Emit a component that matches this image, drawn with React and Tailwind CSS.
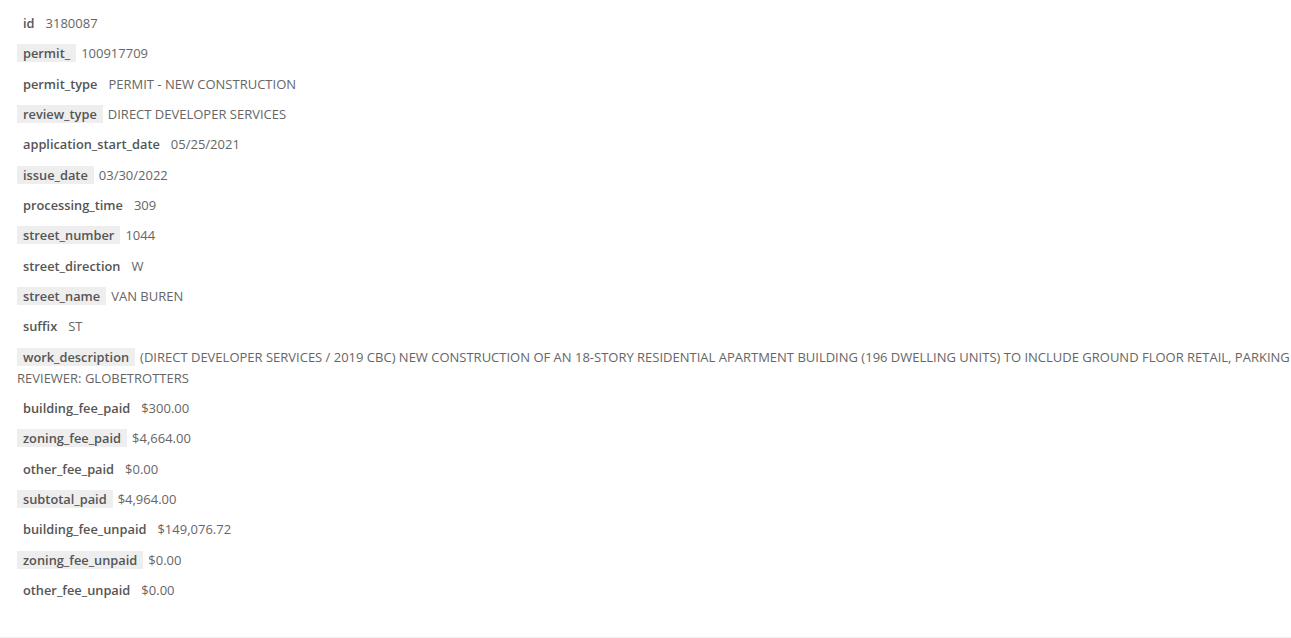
import React from 'react'

const rows = [
  ['id', '3180087'],
  ['permit_', '100917709'],
  ['permit_type', 'PERMIT - NEW CONSTRUCTION'],
  ['review_type', 'DIRECT DEVELOPER SERVICES'],
  ['application_start_date', '05/25/2021'],
  ['issue_date', '03/30/2022'],
  ['processing_time', '309'],
  ['street_number', '1044'],
  ['street_direction', 'W'],
  ['street_name', 'VAN BUREN'],
  ['suffix', 'ST'],
  [
    'work_description',
    '(DIRECT DEVELOPER SERVICES / 2019 CBC) NEW CONSTRUCTION OF AN 18-STORY RESIDENTIAL APARTMENT BUILDING (196 DWELLING UNITS) TO INCLUDE GROUND FLOOR RETAIL, PARKING REVIEWER: GLOBETROTTERS',
  ],
  ['building_fee_paid', '$300.00'],
  ['zoning_fee_paid', '$4,664.00'],
  ['other_fee_paid', '$0.00'],
  ['subtotal_paid', '$4,964.00'],
  ['building_fee_unpaid', '$149,076.72'],
  ['zoning_fee_unpaid', '$0.00'],
  ['other_fee_unpaid', '$0.00'],
]

const App = () => {
  return (
    <div className="h-[638px] bg-white border-b border-[#f0f0f0] font-['Open_Sans',sans-serif] text-[13px] leading-[21px] text-[#666]">
      <div className="pl-[17px] pt-[13px]">
        {rows.map(([label, value], i) => (
          <div key={label} className="mb-[9.33px]">
            {/* every other label gets the grey chip */}
            <span
              className={
                'px-[6px] text-[12.8px] font-semibold text-[#555] ' +
                (i % 2 === 1 ? 'bg-[#eeeeee]' : '')
              }
            >
              {label}
            </span>
            <span className="ml-[5px]">{value}</span>
          </div>
        ))}
      </div>
    </div>
  )
}

export default App
